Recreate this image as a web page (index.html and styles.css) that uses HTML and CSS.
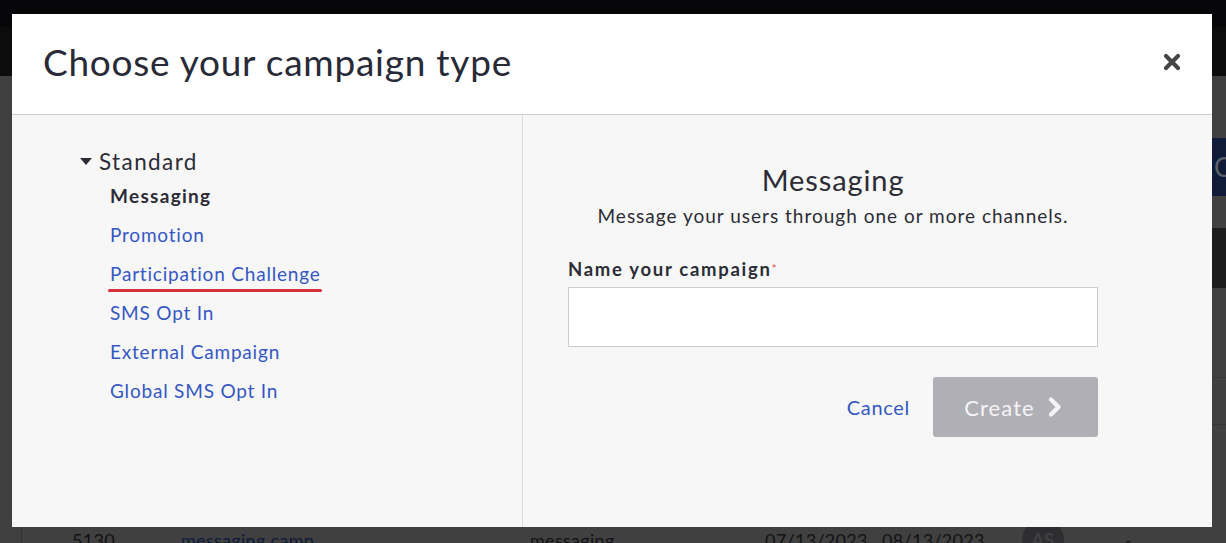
FILE: index.html
```html
<!DOCTYPE html>
<html lang="en">
<head>
<meta charset="utf-8">
<title>Choose your campaign type</title>
<link rel="stylesheet" href="styles.css">
</head>
<body>
<div class="page">
  <div class="topbar"></div>
  <div class="navbar"></div>
  <div class="content">
    <div class="actions"><span class="navy-btn">C</span></div>
    <div class="table">
      <div class="thead"></div>
      <div class="trow tall"></div>
      <div class="trow short"></div>
      <div class="trow mid"></div>
      <div class="trow data">
        <span>5130</span>
        <span class="name">messaging camp</span>
        <span>messaging</span>
        <span>07/13/2023</span>
        <span>08/13/2023</span>
        <span class="avatar">AS</span>
        <span>-</span>
      </div>
    </div>
  </div>
</div>

<div class="modal">
  <div class="modal-header">
    <h1 class="modal-title">Choose your campaign type</h1>
    <button class="close" aria-label="Close">
      <svg width="18" height="18" viewBox="0 0 18 18"><path d="M3 3 L15 15 M15 3 L3 15" stroke="#454545" stroke-width="4.2" stroke-linecap="round"/></svg>
    </button>
  </div>
  <div class="modal-body">
    <div class="types">
      <div class="group-title"><span class="caret"></span>Standard</div>
      <ul class="type-list">
        <li class="active">Messaging</li>
        <li><a>Promotion</a></li>
        <li><a class="marked">Participation Challenge</a></li>
        <li><a>SMS Opt In</a></li>
        <li><a>External Campaign</a></li>
        <li><a>Global SMS Opt In</a></li>
      </ul>
    </div>
    <div class="detail">
      <h2 class="detail-title">Messaging</h2>
      <p class="detail-desc">Message your users through one or more channels.</p>
      <label class="field-label">Name your campaign<span class="req">*</span></label>
      <input class="field-input" type="text">
      <div class="buttons">
        <a class="cancel">Cancel</a>
        <button class="create">Create
          <svg width="16" height="24" viewBox="0 0 16 24"><path d="M4 4.5 L11.5 12 L4 19.5" fill="none" stroke="#f4f4f6" stroke-width="4.4" stroke-linecap="round" stroke-linejoin="round"/></svg>
        </button>
      </div>
    </div>
  </div>
</div>
</body>
</html>
```

FILE: styles.css
```css
* { box-sizing: border-box; }
html, body { margin: 0; padding: 0; }
body {
  width: 1226px;
  height: 543px;
  overflow: hidden;
  background: #404040;
  font-family: "Lato", "Liberation Sans", sans-serif;
  position: relative;
}
.page { display: flex; flex-direction: column; }
.topbar { height: 27px; background: #060608; }
.navbar { height: 49px; background: #0c0c0c; }
.content { padding-left: 21px; }
.actions {
  display: flex;
  justify-content: flex-end;
  align-items: flex-start;
  padding-top: 62px;
  height: 152px;
}
.navy-btn {
  width: 40px;
  height: 58px;
  margin-right: -26px;
  background: #0f1b38;
  color: #5a5f6a;
  font-size: 26px;
  line-height: 58px;
  padding-left: 2px;
}
.table { border-left: 1px solid #333; }
.thead { height: 60px; background: #1d1d1d; }
.trow { border-bottom: 1px solid #363636; }
.trow.tall { height: 90px; }
.trow.short { height: 47px; }
.trow.mid { height: 94px; border-bottom: none; }
.trow.data {
  display: grid;
  grid-template-columns: 109px 349px 235px 117px 140px 103px 40px;
  align-items: center;
  padding-left: 50px;
  height: 42px;
  font-size: 18px;
  letter-spacing: 0.3px;
  color: #121214;
  border-bottom: none;
}
.trow.data .name { color: #0e1a3a; }
.avatar {
  width: 42px;
  height: 42px;
  border-radius: 50%;
  background: #2e2e30;
  color: #404042;
  text-align: center;
  line-height: 42px;
  font-weight: 700;
}

.modal {
  position: absolute;
  left: 12px;
  top: 14px;
  width: 1200px;
  height: 513px;
  background: #f7f7f7;
  display: flex;
  flex-direction: column;
}
.modal-header {
  height: 101px;
  background: #fff;
  border-bottom: 1px solid #cfcfcf;
  display: flex;
  align-items: center;
  justify-content: space-between;
  padding: 0 31px 5px 31px;
}
.modal-title {
  margin: 0;
  font-size: 37px;
  font-weight: 400;
  color: #282a38;
  letter-spacing: 0.75px;
}
.close {
  border: none;
  background: none;
  padding: 0;
  width: 18px;
  height: 18px;
  display: flex;
}
.modal-body { flex: 1; display: flex; }
.types {
  width: 511px;
  border-right: 1px solid #dadada;
  padding: 33px 0 0 68px;
}
.group-title {
  display: flex;
  align-items: center;
  font-size: 22.5px;
  letter-spacing: 1.4px;
  color: #2c2c36;
  height: 26px;
}
.caret {
  width: 0; height: 0;
  border-left: 6.5px solid transparent;
  border-right: 6.5px solid transparent;
  border-top: 7px solid #2c2c36;
  margin-right: 7px;
}
.type-list {
  list-style: none;
  margin: 10px 0 0 0;
  padding: 0 0 0 30px;
  font-size: 19px;
  letter-spacing: 0.8px;
}
.type-list li { height: 39px; line-height: 24px; }
.type-list li.active { font-weight: 700; color: #2c2c36; letter-spacing: 1.3px; }
.type-list a { color: #3558c4; position: relative; display: inline-block; }
.type-list a.marked::after {
  content: "";
  position: absolute;
  left: -2px;
  right: -1px;
  bottom: -6px;
  height: 3px;
  border-radius: 2px;
  background: #d8303c;
}
.detail {
  flex: 1;
  padding: 48px 114px 0 45px;
  display: flex;
  flex-direction: column;
}
.detail-title {
  margin: 0;
  text-align: center;
  font-size: 29px;
  font-weight: 400;
  letter-spacing: 0.9px;
  color: #2c2c36;
  line-height: 34px;
}
.detail-desc {
  margin: 7px 0 0 0;
  text-align: center;
  font-size: 19px;
  letter-spacing: 1px;
  color: #2c2c36;
  line-height: 24px;
}
.field-label {
  margin-top: 30px;
  font-size: 18.5px;
  font-weight: 700;
  letter-spacing: 1.7px;
  color: #2c2c36;
  line-height: 22px;
}
.req { color: #e0504f; font-size: 12px; vertical-align: top; font-weight: 400; letter-spacing: 0; }
.field-input {
  margin-top: 7px;
  height: 60px;
  width: 530px;
  border: 1px solid #cdcdcd;
  background: #fff;
}
.buttons {
  margin-top: 30px;
  display: flex;
  justify-content: flex-end;
  align-items: center;
  gap: 23px;
}
.cancel { color: #3558c4; font-size: 20px; letter-spacing: 0.7px; }
.create {
  width: 165px;
  height: 60px;
  border: none;
  border-radius: 3px;
  background: #b0afb5;
  color: #f4f4f6;
  font-family: inherit;
  font-size: 22px;
  letter-spacing: 1.1px;
  display: flex;
  align-items: center;
  justify-content: center;
  gap: 12px;
  padding: 0 4px 0 0;
}
```
